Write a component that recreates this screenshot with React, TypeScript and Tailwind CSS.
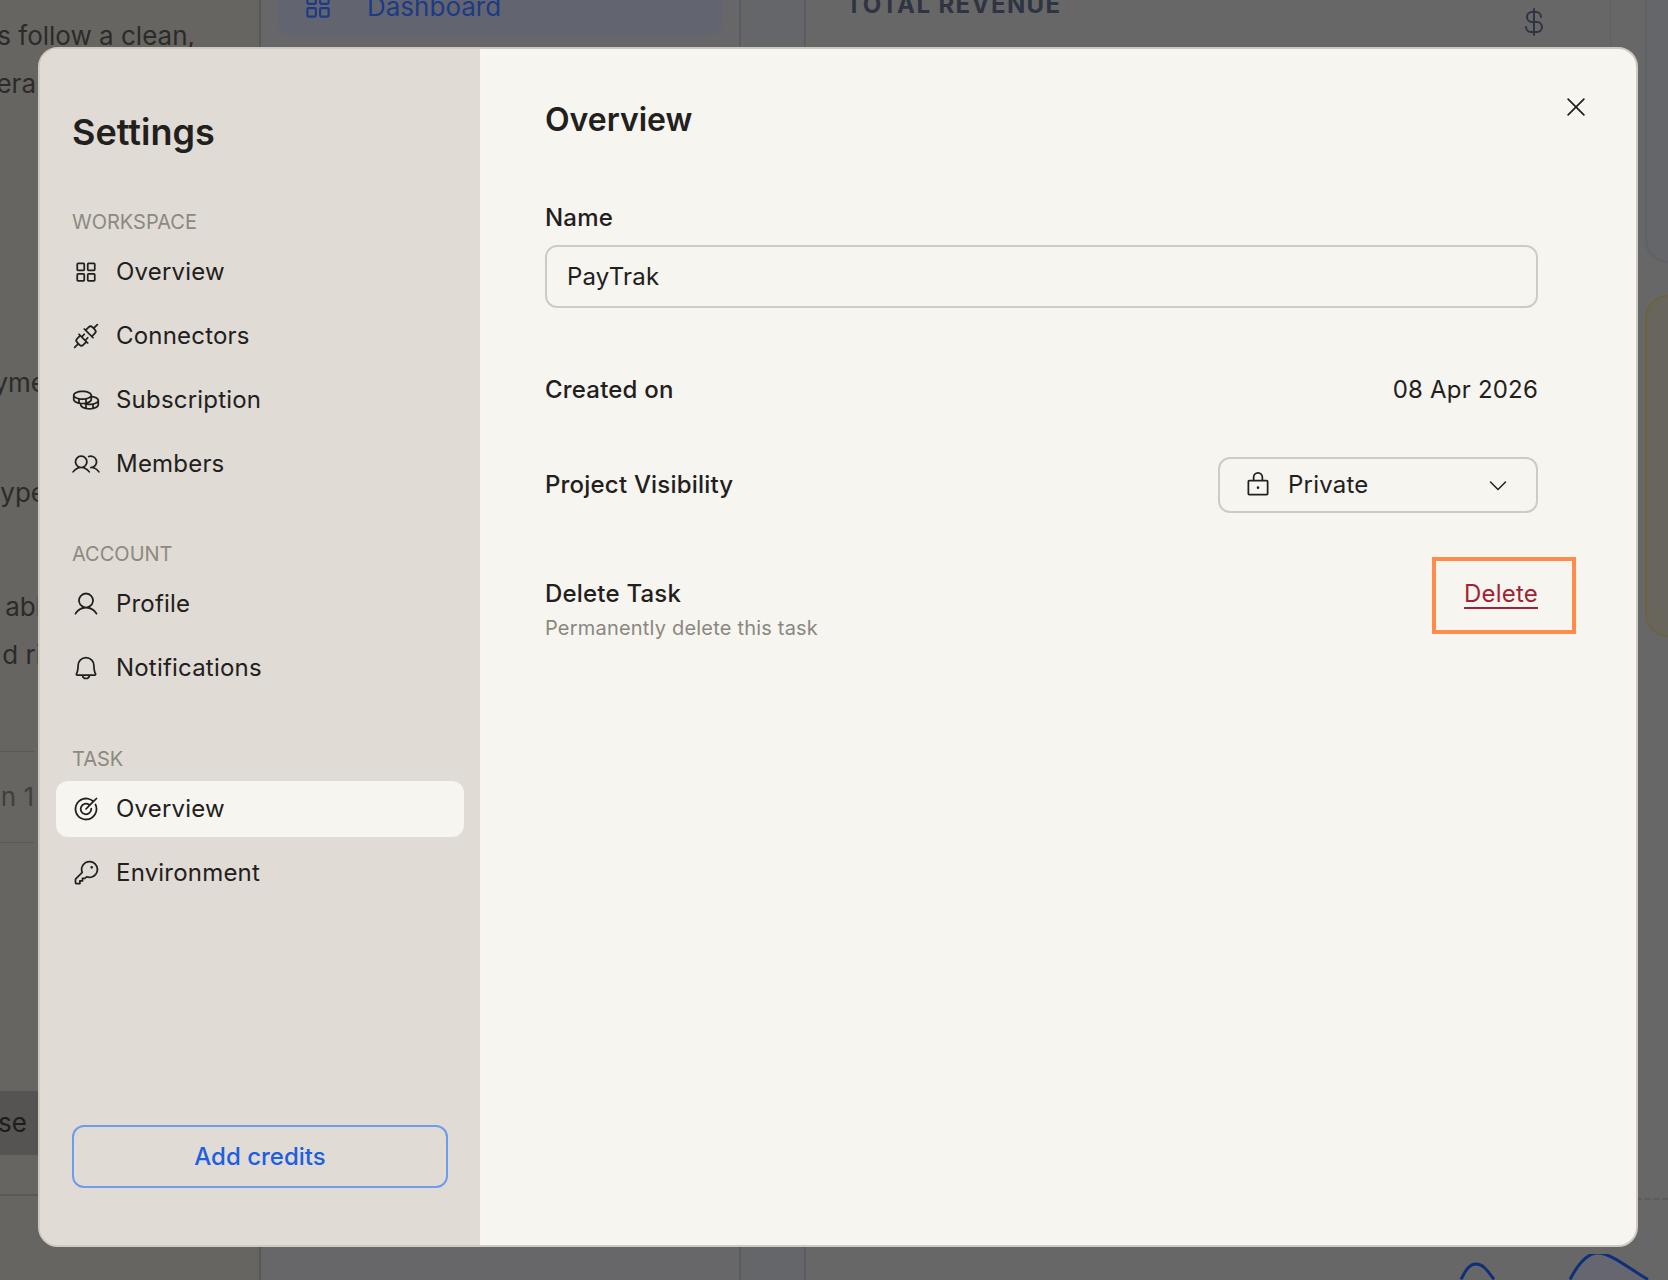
import type { ReactNode } from 'react';
import {
  PiBell,
  PiCaretDown,
  PiCoins,
  PiCurrencyDollar,
  PiKey,
  PiLock,
  PiPlugs,
  PiSquaresFour,
  PiTarget,
  PiUser,
  PiUsers,
  PiX,
} from 'react-icons/pi';

const FONT = "font-['Inter','Liberation_Sans',sans-serif]";

function NavRow({ icon, label, active }: { icon: ReactNode; label: string; active?: boolean }) {
  return (
    <div
      className={`flex h-[56px] items-center gap-[16px] rounded-[12px] px-[16px] text-[24px] tracking-[0.2px] text-[#22201d] ${
        active ? 'bg-[#f6f5f0]' : ''
      }`}
    >
      <span className="flex w-[28px] justify-center text-[#22201d]">{icon}</span>
      {label}
    </div>
  );
}

function Section({ title, className, children }: { title: string; className?: string; children: ReactNode }) {
  return (
    <div className={className}>
      <div className="mb-[8px] h-[28px] px-[16px] text-[20px] leading-[28px] text-[#8d8981]">{title}</div>
      <div className="flex flex-col gap-[8px]">{children}</div>
    </div>
  );
}

function Backdrop() {
  return (
    <div className="flex h-full w-full text-[#2c2b29]">
      {/* left document panel */}
      <div className="flex w-[261px] shrink-0 flex-col border-r-2 border-[#585855] bg-[#666562] pt-[12px] text-[26px] leading-[48px]">
        <div className="flex w-[195px] justify-end whitespace-nowrap">ts follow a clean,</div>
        <div className="flex w-[36px] justify-end whitespace-nowrap">era</div>
        <div className="mt-[251px] flex w-[46px] justify-end whitespace-nowrap">yme</div>
        <div className="mt-[62px] flex w-[46px] justify-end whitespace-nowrap">ype</div>
        <div className="mt-[66px] flex w-[42px] justify-end whitespace-nowrap">abl</div>
        <div className="flex w-[42px] justify-end whitespace-nowrap">d ri</div>
        <div className="mt-[72px] flex h-[92px] w-[34px] items-center justify-end whitespace-nowrap border-y border-[#595957] text-[#403f3d]">
          on 1
        </div>
        <div className="mt-[248px] flex h-[64px] items-center bg-[#555452] pl-[0px] text-[#1e1d1c]">
          <div className="flex w-[27px] justify-end whitespace-nowrap">se</div>
        </div>
        <div className="mt-[39px] border-t-2 border-[#585855]" />
      </div>

      {/* nav column */}
      <div className="w-[480px] shrink-0 border-r-2 border-[#5b5c5e] bg-[#676769] px-[16px]">
        <div className="-mt-[24px] flex h-[60px] items-center gap-[32px] rounded-[16px] bg-[#626570] px-[24px] text-[26px] text-[#1d3a85]">
          <PiSquaresFour className="h-[34px] w-[34px]" />
          Dashboard
        </div>
      </div>

      <div className="w-[65px] shrink-0 border-r-2 border-[#5b5c5e] bg-[#65666a]" />

      {/* main area */}
      <div className="flex min-w-0 flex-1 flex-col bg-[#676767]">
        <div className="flex">
          <div className="flex h-[263px] w-[805px] shrink-0 items-start justify-between border-r border-[#606164] pl-[40px] pr-[60px]">
            <div className="-mt-[13px] whitespace-nowrap text-[24px] font-bold tracking-[1.4px] text-[#2f3442]">TOTAL REVENUE</div>
            <PiCurrencyDollar className="mt-[6px] h-[32px] w-[32px] text-[#2f3442]" />
          </div>
          <div className="ml-[34px] h-[263px] flex-1 rounded-bl-[24px] border-b-2 border-l-2 border-[#606164] bg-[#65666a]" />
        </div>
        <div className="ml-[839px] mt-[32px] h-[342px] rounded-l-[24px] border-y-2 border-l-2 border-[#6c6340] bg-[#68665c]" />
        <div className="mt-auto">
          <div className="ml-[830px] border-t-2 border-dashed border-[#5c5c5c]" />
          <svg className="mt-[54px] block h-[26px] w-[860px]" viewBox="0 0 860 26" fill="none">
            <path
              d="M655 25.5C660 15 664 10 670 10C677 10 681 16 688 25.5"
              stroke="#0f2f7c"
              strokeWidth="3"
            />
            <path d="M764 25.5C773 8 782 -1 792 -1C805 -1 825 16 842 25.5Z" fill="#656670" />
            <path
              d="M764 25.5C773 8 782 -1 792 -1C805 -1 825 16 842 25.5"
              stroke="#0f2f7c"
              strokeWidth="3"
            />
          </svg>
        </div>
      </div>
    </div>
  );
}

export default function App() {
  return (
    <div className={`${FONT} relative h-[1280px] w-[1668px] overflow-hidden bg-[#666666]`}>
      <Backdrop />

      {/* settings modal */}
      <div className="absolute left-[38px] top-[47px] flex h-[1200px] w-[1600px] overflow-hidden rounded-[20px] border-2 border-[#cfcac0] bg-[#f6f5f0]">
        <aside className="flex w-[440px] shrink-0 flex-col bg-[#e0dbd4] px-[16px] pb-[57px] pt-[61px]">
          <h2 className="h-[44px] px-[16px] text-[36px] font-semibold leading-[44px] text-[#22201d]">Settings</h2>
          <Section title="WORKSPACE" className="mt-[54px]">
            <NavRow icon={<PiSquaresFour className="h-[28px] w-[28px]" />} label="Overview" />
            <NavRow icon={<PiPlugs className="h-[28px] w-[28px]" />} label="Connectors" />
            <NavRow icon={<PiCoins className="h-[28px] w-[28px]" />} label="Subscription" />
            <NavRow icon={<PiUsers className="h-[28px] w-[28px]" />} label="Members" />
          </Section>
          <Section title="ACCOUNT" className="mt-[48px]">
            <NavRow icon={<PiUser className="h-[28px] w-[28px]" />} label="Profile" />
            <NavRow icon={<PiBell className="h-[28px] w-[28px]" />} label="Notifications" />
          </Section>
          <Section title="TASK" className="mt-[49px]">
            <NavRow icon={<PiTarget className="h-[28px] w-[28px]" />} label="Overview" active />
            <NavRow icon={<PiKey className="h-[28px] w-[28px]" />} label="Environment" />
          </Section>
          <button className="mx-[16px] mt-auto flex h-[63px] items-center justify-center rounded-[12px] border-2 border-[#6d9cee] text-[24px] font-medium text-[#1d5fe0]">
            Add credits
          </button>
        </aside>

        <main className="relative flex-1 pl-[65px] pr-[98px] pt-[51px] text-[24px] tracking-[0.2px] text-[#22201d]">
          <button className="absolute right-[46px] top-[44px] text-[#22201d]">
            <PiX className="h-[28px] w-[28px]" />
          </button>
          <h1 className="h-[40px] text-[32px] font-semibold leading-[40px] tracking-normal">Overview</h1>

          <div className="mt-[63px] h-[30px] font-medium leading-[30px]">Name</div>
          <div className="mt-[12px] flex h-[63px] items-center rounded-[12px] border-2 border-[#d0cbc2] px-[20px]">PayTrak</div>

          <div className="mt-[67px] flex h-[30px] items-center justify-between leading-[30px]">
            <span className="font-medium">Created on</span>
            <span>08 Apr 2026</span>
          </div>

          <div className="mt-[52px] flex h-[56px] items-center justify-between">
            <span className="font-medium">Project Visibility</span>
            <div className="flex h-[56px] w-[320px] items-center rounded-[12px] border-2 border-[#d0cbc2] pl-[24px] pr-[26px]">
              <PiLock className="h-[28px] w-[28px]" />
              <span className="ml-[16px] flex-1">Private</span>
              <PiCaretDown className="h-[24px] w-[24px]" />
            </div>
          </div>

          <div className="mt-[44px] flex items-start justify-between">
            <div className="pt-[22px]">
              <div className="h-[30px] font-medium leading-[30px]">Delete Task</div>
              <div className="mt-[6px] h-[26px] text-[20px] leading-[26px] text-[#8a8780]">Permanently delete this task</div>
            </div>
            <a className="-mr-[38px] h-[77px] border-[4px] border-[#ff8c4b] pl-[28px] pr-[34px] pt-[18px] leading-[30px] text-[#a31f33] underline underline-offset-[5px]">
              Delete
            </a>
          </div>
        </main>
      </div>
    </div>
  );
}
